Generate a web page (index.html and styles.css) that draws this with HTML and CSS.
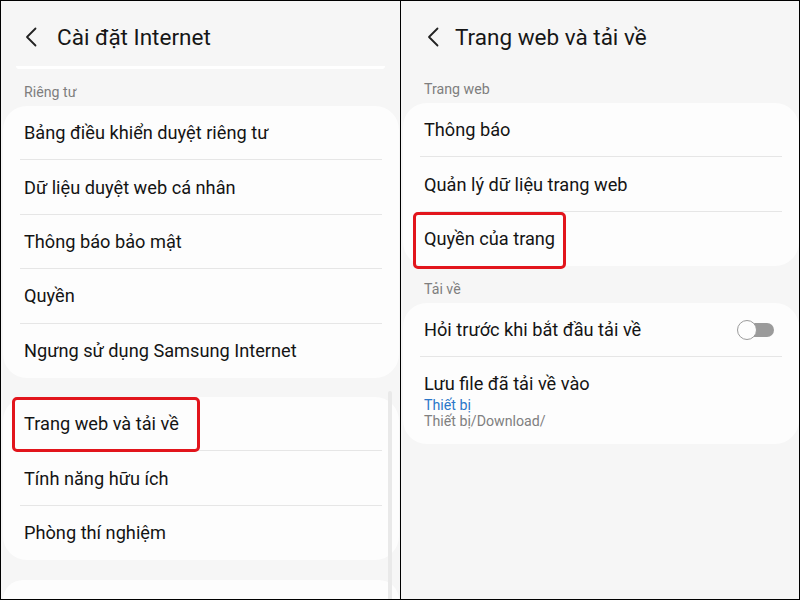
FILE: index.html
```html
<!DOCTYPE html>
<html lang="vi">
<head>
<meta charset="utf-8">
<link rel="stylesheet" href="styles.css">
</head>
<body>
<div class="frame">
  <section class="panel panel-left">
    <header class="head">
      <svg class="back" width="12" height="20" viewBox="0 0 12 20"><polyline points="10.5,1.5 2,10 10.5,18.5" fill="none" stroke="#222" stroke-width="1.8" stroke-linecap="round" stroke-linejoin="round"/></svg>
      <h1 class="title">Cài đặt Internet</h1>
    </header>
    <div class="peek"></div>
    <div class="label label-first">Riêng tư</div>
    <div class="card">
      <div class="item">Bảng điều khiển duyệt riêng tư</div>
      <div class="item">Dữ liệu duyệt web cá nhân</div>
      <div class="item">Thông báo bảo mật</div>
      <div class="item">Quyền</div>
      <div class="item">Ngưng sử dụng Samsung Internet</div>
    </div>
    <div class="card card-gap">
      <div class="item hl-left">Trang web và tải về<span class="redbox rb-left"></span></div>
      <div class="item">Tính năng hữu ích</div>
      <div class="item">Phòng thí nghiệm</div>
    </div>
    <div class="card card-gap card-tail"></div>
    <div class="scrollbar"></div>
  </section>
  <section class="panel panel-right">
    <header class="head">
      <svg class="back" width="12" height="20" viewBox="0 0 12 20"><polyline points="10.5,1.5 2,10 10.5,18.5" fill="none" stroke="#222" stroke-width="1.8" stroke-linecap="round" stroke-linejoin="round"/></svg>
      <h1 class="title">Trang web và tải về</h1>
    </header>
    <div class="label label-r1">Trang web</div>
    <div class="card">
      <div class="item">Thông báo</div>
      <div class="item">Quản lý dữ liệu trang web</div>
      <div class="item hl-right">Quyền của trang<span class="redbox rb-right"></span></div>
    </div>
    <div class="label label-r2">Tải về</div>
    <div class="card">
      <div class="item item-toggle">
        <span>Hỏi trước khi bắt đầu tải về</span>
        <span class="toggle"><span class="thumb"></span></span>
      </div>
      <div class="item item-multi">
        <div class="main">Lưu file đã tải về vào</div>
        <div class="sub-blue">Thiết bị</div>
        <div class="sub-grey">Thiết bị/Download/</div>
      </div>
    </div>
  </section>
</div>
</body>
</html>
```

FILE: styles.css
```css
* { box-sizing: border-box; }
html, body { margin: 0; padding: 0; }
body {
  width: 800px;
  height: 600px;
  overflow: hidden;
  font-family: Roboto, "Noto Sans", "Liberation Sans", sans-serif;
  color: #151515;
  background: #000;
}
.frame {
  width: 800px;
  height: 600px;
  border: 1px solid #000;
  display: flex;
  gap: 1px;
  background: #000;
}
.panel {
  position: relative;
  flex: 1;
  background: #f6f6f6;
  overflow: hidden;
  display: flex;
  flex-direction: column;
}
.panel > * { flex-shrink: 0; }
.panel-left { padding: 0 1px 0 2px; }
.panel-right { padding: 0 0 0 2px; }
.head {
  height: 65px;
  display: flex;
  align-items: center;
  padding: 6px 0 0 22px;
}
.back { flex: none; }
.title {
  margin: 0 0 0 20px;
  font-size: 22.5px;
  font-weight: 400;
  color: #161616;
  letter-spacing: 0;
}
.panel-right .head { padding-left: 24px; }
.panel-right .title { margin-left: 16px; }
.peek {
  height: 3px;
  margin: 0 14px 0 13px;
  background: #fff;
  border-radius: 0 0 3px 3px;
}
.label {
  font-size: 14.2px;
  color: #7e7e7e;
  padding-left: 21px;
  height: 18px;
  line-height: 18px;
}
.label-first { margin-top: 14px; margin-bottom: 5px; }
.label-r1 { margin-top: 14px; margin-bottom: 5px; }
.label-r2 { margin-top: 14px; margin-bottom: 5px; }
.card {
  background: #fdfdfd;
  border-radius: 24px;
  padding: 0 17px;
}
.card-gap { margin-top: 19px; }
.card-tail { height: 40px; margin-top: 20px; }
.item {
  position: relative;
  height: 54.4px;
  display: flex;
  align-items: center;
  padding-left: 4px;
  font-size: 18.2px;
  color: #141414;
  border-bottom: 1px solid #e6e6e6;
}
.item:last-child { border-bottom: none; }
.item-toggle {
  justify-content: space-between;
  padding-right: 8px;
  height: 54px;
}
.toggle {
  position: relative;
  width: 36px;
  height: 14px;
  border-radius: 7px;
  background: #9b9b9b;
  margin-top: 1px;
}
.thumb {
  position: absolute;
  left: -1px;
  top: -3px;
  width: 20px;
  height: 20px;
  border-radius: 50%;
  background: #fdfdfd;
  border: 1.5px solid #9b9b9b;
}
.item-multi {
  height: 87px;
  flex-direction: column;
  align-items: flex-start;
  justify-content: flex-start;
  padding-top: 15px;
}
.item-multi .main { font-size: 18.2px; line-height: 24px; }
.sub-blue { font-size: 14.2px; color: #2a77c9; line-height: 16px; margin-top: 1px; }
.sub-grey { font-size: 14.2px; color: #808080; line-height: 16px; }
.redbox {
  position: absolute;
  border: 3px solid #e2151c;
  border-radius: 5px;
}
.rb-left { left: -8px; top: 0px; width: 188px; height: 55px; }
.rb-right { left: -7px; top: 0px; width: 153px; height: 57px; }
.scrollbar {
  position: absolute;
  left: 387px;
  top: 390px;
  width: 4px;
  height: 210px;
  background: #e9e9e9;
  border-radius: 2px;
}
```
